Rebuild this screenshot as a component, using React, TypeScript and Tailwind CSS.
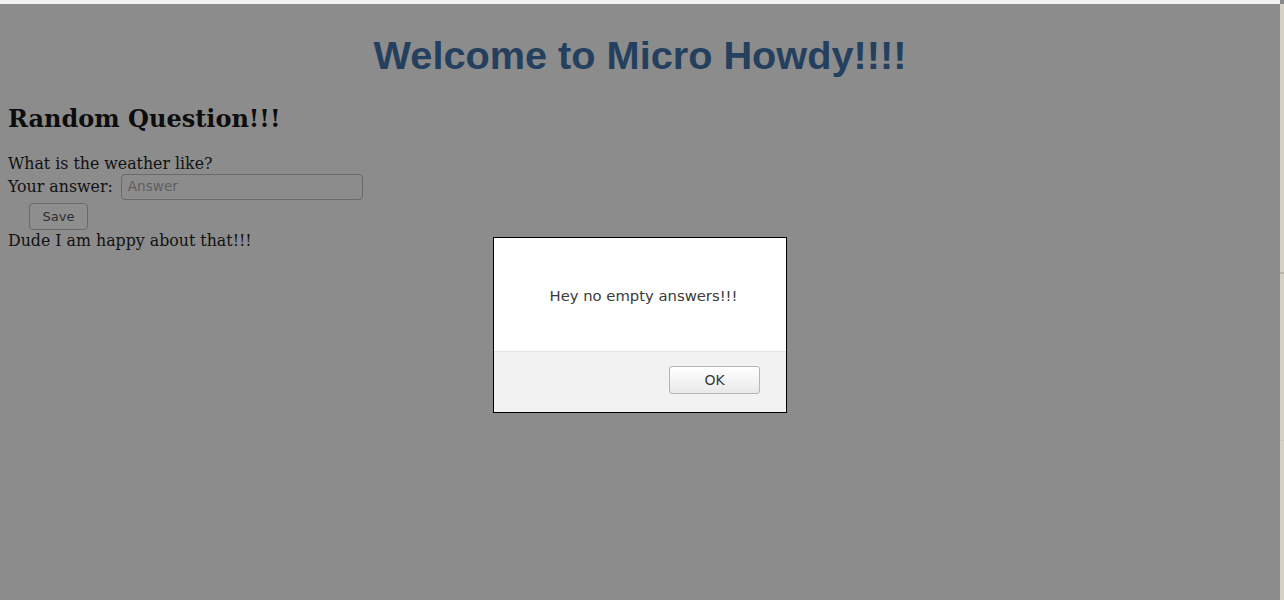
export default function App() {
  return (
    <div className="relative h-[600px] w-[1284px] overflow-hidden bg-[#8c8c8c] font-['DejaVu_Serif',serif] text-[#111]">
      {/* browser chrome strip */}
      <div className="flex h-[4px]">
        <div className="flex-1 bg-[#f2f1f0]" />
        <div className="w-[4px] bg-[#8a8a8a]" />
      </div>
      <div className="flex h-[596px]">
        <div className="flex-1">
          <h1 className="pt-[28px] text-center font-['Liberation_Sans',Arial,sans-serif] text-[39.7px] leading-[46px] font-bold text-[#24405e]">
            Welcome to Micro Howdy!!!!
          </h1>
          <div className="px-[8px]">
            <h2 className="mt-[27px] text-[24px] leading-[28px] font-bold text-[#0d0d0d]">Random Question!!!</h2>
            <p className="mt-[21px] text-[15.8px] leading-[19px]">What is the weather like?</p>
            <div className="flex h-[27px] items-center text-[15.8px]">
              <span>Your answer:</span>
              <div className="ml-[8px] flex h-[26px] w-[242px] items-center rounded-[4px] border border-[#6a6a6a] px-[6px] font-['DejaVu_Sans',sans-serif] text-[13.6px] text-[#5e5e5e]">
                Answer
              </div>
            </div>
            <div className="mt-[3px] flex h-[27px] pl-[21px]">
              <div className="flex w-[59px] items-center justify-center rounded-[4px] border border-[#6a6a6a] bg-[#8e8e8e] font-['DejaVu_Sans',sans-serif] text-[13px] text-[#2e2e2e]">
                Save
              </div>
            </div>
            <p className="mt-[1px] text-[15.8px] leading-[19px]">Dude I am happy about that!!!</p>
          </div>
        </div>
        <div className="flex w-[4px] flex-col bg-[#d5d1c5]">
          <div className="mt-[268px] h-[2px] bg-[#b8b4aa]" />
          <div className="mt-[166px] h-[1px] bg-[#cdc9bd]" />
        </div>
      </div>

      {/* alert dialog */}
      <div className="absolute left-[493px] top-[237px] flex h-[176px] w-[294px] flex-col border border-black bg-white font-['DejaVu_Sans',sans-serif]">
        <div className="flex h-[113px] items-center justify-center pl-[7px] pt-[4px] text-[14.8px] text-[#3a3a3a]">
          Hey no empty answers!!!
        </div>
        <div className="flex flex-1 items-start justify-end border-t border-[#e3e3e3] bg-[#f2f2f2] pr-[26px] pt-[14px]">
          <div className="flex h-[28px] w-[91px] items-center justify-center rounded-[3px] border border-[#b5b5b5] bg-gradient-to-b from-[#ffffff] to-[#e9e9e9] text-[14px] text-[#3a3a3a]">
            OK
          </div>
        </div>
      </div>
    </div>
  );
}
